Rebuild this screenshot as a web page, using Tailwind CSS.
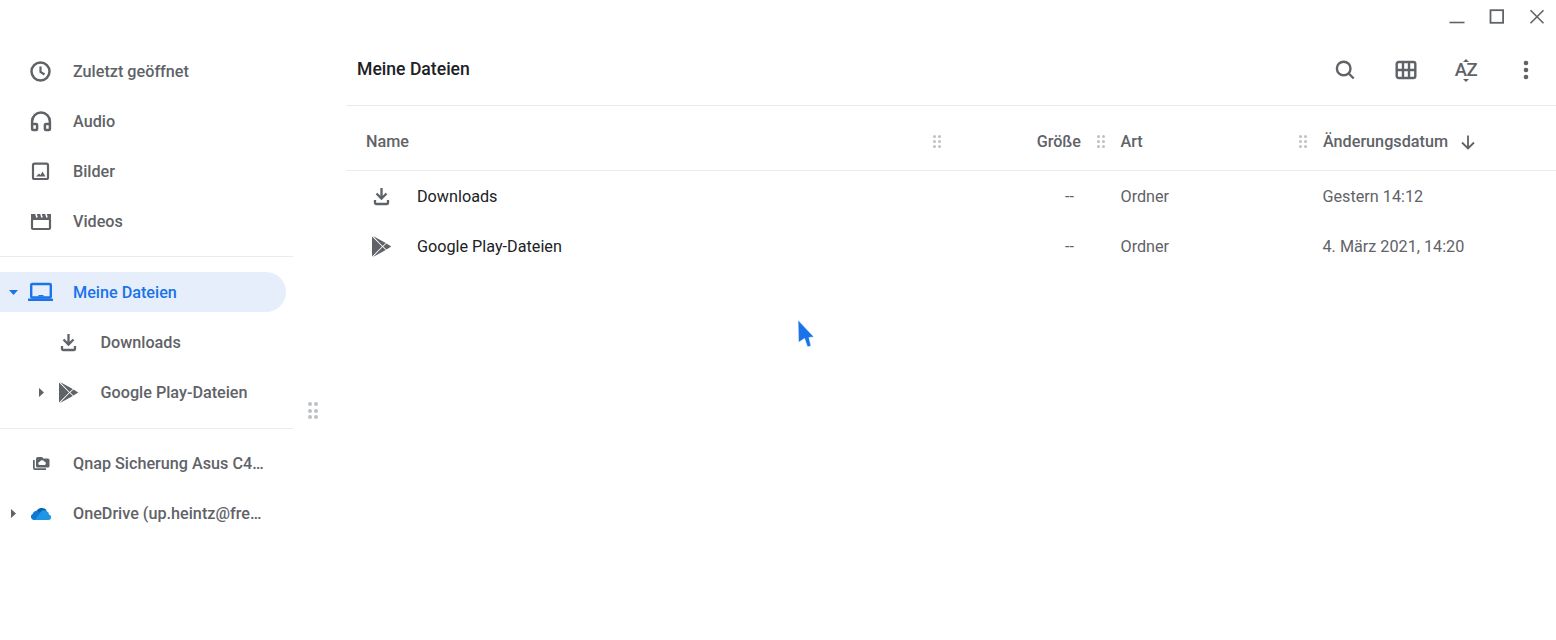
<!DOCTYPE html>
<html lang="de">
<head>
<meta charset="UTF-8">
<title>Meine Dateien</title>
<script src="https://cdn.jsdelivr.net/npm/@tailwindcss/browser@4"></script>
</head>
<body class="relative h-[640px] w-[1556px] overflow-hidden bg-white font-['Roboto',sans-serif] text-[16.2px] text-[#5f6368]">

<!-- window buttons -->
<div class="absolute right-0 top-0 flex h-[34px] items-center text-[#5f6368]">
  <svg class="w-5 h-5 mr-5" viewBox="0 0 20 20" fill="none" stroke="currentColor" stroke-width="1.6"><path d="M2.5 15.500h15"/></svg>
  <svg class="w-5 h-5 mr-5" viewBox="0 0 20 20" fill="none" stroke="currentColor" stroke-width="1.8"><rect x="3.5" y="3.2" width="12.6" height="12.6"/></svg>
  <svg class="w-5 h-5 mr-[9px]" viewBox="0 0 20 20" fill="none" stroke="currentColor" stroke-width="1.6"><path d="M3.5 3.2l13 13M16.5 3.2l-13 13"/></svg>
</div>

<div class="flex h-full">
  <!-- sidebar -->
  <aside class="w-[293px] shrink-0 pt-[46px] font-medium">
    <div class="flex h-[50px] items-center pl-[29px]">
      <svg class="w-6 h-6 mr-5" viewBox="0 0 24 24" fill="none" stroke="currentColor"><circle cx="11.5" cy="12.5" r="9" stroke-width="2.5"/><path d="M11.5 7.5v5.5l4 2.5" stroke-width="2.2"/></svg>
      <span class="pt-[2px]">Zuletzt geöffnet</span>
    </div>
    <div class="flex h-[50px] items-center pl-[29px]">
      <svg class="w-6 h-6 mr-5" viewBox="0 0 24 24" fill="none" stroke="currentColor" stroke-width="2.5"><path d="M3.1 16v-3.5a8.9 8.9 0 0 1 17.8 0V16"/><rect x="3.1" y="15" width="5" height="6" rx="1"/><rect x="15.9" y="15" width="5" height="6" rx="1"/></svg>
      <span class="pt-[2px]">Audio</span>
    </div>
    <div class="flex h-[50px] items-center pl-[29px]">
      <svg class="w-6 h-6 mr-5" viewBox="0 0 24 24" fill="currentColor"><rect x="4" y="4.7" width="15" height="15.3" rx="1.5" fill="none" stroke="currentColor" stroke-width="2.2"/><path d="M7 17.5l3-3 1.500 1.500 2-3.500 3 5z"/></svg>
      <span class="pt-[2px]">Bilder</span>
    </div>
    <div class="flex h-[50px] items-center pl-[29px]">
      <svg class="w-6 h-6 mr-5" viewBox="0 0 24 24" fill="currentColor"><rect x="3" y="10" width="18" height="10" rx="1" fill="none" stroke="currentColor" stroke-width="2.2"/><path d="M2 5h20v5H2z"/><path d="M7 5l1 3.500M12 5l1 3.500M17 5l1 3.500" stroke="#ffffff" stroke-width="1.6"/></svg>
      <span class="pt-[2px]">Videos</span>
    </div>

    <div class="mt-[10px] h-px bg-[#eaebec]"></div>

    <div class="mt-[15px] flex h-10 w-[286px] items-center rounded-r-full bg-[#e6eefb] text-[#1a73e8]">
      <svg class="ml-[9px] w-[9px] h-[5px] mr-[10px]" viewBox="0 0 10 5" preserveAspectRatio="none" fill="currentColor"><path d="M0 0h10L5 5z"/></svg>
      <svg class="w-[26px] h-6 mr-[19px]" viewBox="0 0 26 24" fill="currentColor"><rect x="3.2" y="4" width="19.6" height="13.5" rx="1" fill="none" stroke="currentColor" stroke-width="2.4"/><rect x="10.5" y="15" width="5" height="1.5"/><rect x="0" y="18.500" width="25" height="2.500" rx=".5"/></svg>
      <span class="pt-[2px]">Meine Dateien</span>
    </div>
    <div class="mt-[5px] flex h-[50px] items-center pl-[57px]">
      <svg class="w-6 h-6 mr-[19.5px]" viewBox="0 0 24 24" fill="none" stroke="currentColor" stroke-width="2.3"><path d="M11.5 4v10M6.500 9.500l5 5 5-5M5 16v3a1 1 0 0 0 1 1h11a1 1 0 0 0 1-1v-3"/></svg>
      <span class="pt-[2px]">Downloads</span>
    </div>
    <div class="flex h-[50px] items-center pl-[39px]">
      <svg class="w-[5px] h-[9px] mr-[13px]" viewBox="0 0 6 10" preserveAspectRatio="none" fill="currentColor"><path d="M0 0l6 5-6 5z"/></svg>
      <svg class="w-6 h-6 mr-[19.5px]" viewBox="0 0 24 24" fill="currentColor"><path d="M2 2.500v20l10-10zM3 2l12.800 7-3.200 3zM3 23l12.800-7-3.200-3zM13.300 12.500l3.200-3 4.800 3-4.800 3z"/></svg>
      <span class="pt-[2px]">Google Play-Dateien</span>
    </div>

    <div class="mt-[11px] h-px bg-[#eaebec]"></div>

    <div class="mt-[9px] flex h-[50px] items-center pl-[29px]">
      <svg class="w-6 h-6 mr-5" viewBox="0 0 24 24" fill="currentColor" fill-rule="evenodd"><path d="M4 9h1.700v8.300H17V19H5.700A1.700 1.700 0 0 1 4 17.300z"/><path d="M9 6h4l1.500 1.500H19a1.500 1.500 0 0 1 1.500 1.500v6a1.500 1.500 0 0 1-1.500 1.500H8.500A1.500 1.500 0 0 1 7 15V8a2 2 0 0 1 2-2zm2 8a1.600 1.600 0 0 1-.2-3.200 2.400 2.400 0 0 1 4.400-.4 1.900 1.900 0 0 1 .6 3.600z"/></svg>
      <span class="pt-[2px]">Qnap Sicherung Asus C4…</span>
    </div>
    <div class="flex h-[50px] items-center pl-[11px]">
      <svg class="w-[5px] h-[9px] mr-[13px]" viewBox="0 0 6 10" preserveAspectRatio="none" fill="currentColor"><path d="M0 0l6 5-6 5z"/></svg>
      <svg class="w-6 h-6 mr-5" viewBox="0 0 24 24"><path d="M7 12a6 6 0 0 1 10.700-2.700L12 14z" fill="#0364b8"/><path d="M8 19H5a3.300 3.300 0 0 1-1.200-6.300A4 4 0 0 1 9 10l4 4z" fill="#0f78d4"/><path d="M6 19h13.500a2.700 2.700 0 0 0 .7-5.300 5 5 0 0 0-8.200-3.200z" fill="#1e96e3"/></svg>
      <span class="pt-[2px]">OneDrive (up.heintz@fre…</span>
    </div>
  </aside>

  <!-- splitter -->
  <div class="flex w-[53px] shrink-0 justify-start pl-[15px] pt-[402px]">
    <div class="grid h-[18px] w-[10px] grid-cols-2 gap-x-[2px] gap-y-[2px]">
      <i class="h-1 w-1 rounded-full bg-[#bdc1c6]"></i><i class="h-1 w-1 rounded-full bg-[#bdc1c6]"></i>
      <i class="h-1 w-1 rounded-full bg-[#bdc1c6]"></i><i class="h-1 w-1 rounded-full bg-[#bdc1c6]"></i>
      <i class="h-1 w-1 rounded-full bg-[#bdc1c6]"></i><i class="h-1 w-1 rounded-full bg-[#bdc1c6]"></i>
    </div>
  </div>

  <!-- main -->
  <main class="flex-1">
    <header class="mt-[34px] flex h-[72px] items-center justify-between border-b border-[#eaebec] pl-[11px] pr-[18px]">
      <h1 class="text-[17.6px] font-medium text-[#202124]">Meine Dateien</h1>
      <div class="flex items-center gap-[36px]">
        <svg class="w-6 h-6" viewBox="0 0 24 24" fill="none" stroke="currentColor" stroke-width="2.4"><circle cx="9.700" cy="10.500" r="6.800"/><path d="M14.700 15.500l5 5"/></svg>
        <svg class="w-6 h-6" viewBox="0 0 24 24" fill="none" stroke="currentColor" stroke-width="2.4"><rect x="2.700" y="4" width="18.600" height="16" rx="2"/><path d="M9 4v16M15 4v16M2.700 12h18.600"/></svg>
        <div class="relative flex h-6 w-6 items-center justify-center pt-[2px] text-[18.5px] leading-none font-medium tracking-[-0.5px]">AZ
          <svg class="absolute left-[9px] top-[1px] h-[3px] w-[6px]" viewBox="0 0 6 3" fill="currentColor"><path d="M3 0l3 3H0z"/></svg>
          <svg class="absolute left-[9px] bottom-0 h-[3px] w-[6px]" viewBox="0 0 6 3" fill="currentColor"><path d="M3 3l3-3H0z"/></svg>
        </div>
        <svg class="w-6 h-6" viewBox="0 0 24 24" fill="currentColor"><circle cx="12" cy="5" r="2.300"/><circle cx="12" cy="12" r="2.300"/><circle cx="12" cy="19" r="2.300"/></svg>
      </div>
    </header>

    <div class="grid grid-cols-[601px_164px_202px_243px]">
      <!-- header row -->
      <div class="col-span-4 grid h-[65px] grid-cols-subgrid items-center border-b border-[#eaebec] pt-[8px] font-medium">
        <div class="flex items-center justify-between pl-5 pr-[6px]"><span>Name</span><div class="grid h-[13px] w-[8px] grid-cols-2 gap-[2px]"><i class="size-[3px] rounded-full bg-[#bdc1c6]"></i><i class="size-[3px] rounded-full bg-[#bdc1c6]"></i><i class="size-[3px] rounded-full bg-[#bdc1c6]"></i><i class="size-[3px] rounded-full bg-[#bdc1c6]"></i><i class="size-[3px] rounded-full bg-[#bdc1c6]"></i><i class="size-[3px] rounded-full bg-[#bdc1c6]"></i></div></div>
        <div class="flex items-center justify-end gap-4 pr-[6px]"><span>Größe</span><div class="grid h-[13px] w-[8px] grid-cols-2 gap-[2px]"><i class="size-[3px] rounded-full bg-[#bdc1c6]"></i><i class="size-[3px] rounded-full bg-[#bdc1c6]"></i><i class="size-[3px] rounded-full bg-[#bdc1c6]"></i><i class="size-[3px] rounded-full bg-[#bdc1c6]"></i><i class="size-[3px] rounded-full bg-[#bdc1c6]"></i><i class="size-[3px] rounded-full bg-[#bdc1c6]"></i></div></div>
        <div class="flex items-center justify-between pl-[9.5px] pr-[6px]"><span>Art</span><div class="grid h-[13px] w-[8px] grid-cols-2 gap-[2px]"><i class="size-[3px] rounded-full bg-[#bdc1c6]"></i><i class="size-[3px] rounded-full bg-[#bdc1c6]"></i><i class="size-[3px] rounded-full bg-[#bdc1c6]"></i><i class="size-[3px] rounded-full bg-[#bdc1c6]"></i><i class="size-[3px] rounded-full bg-[#bdc1c6]"></i><i class="size-[3px] rounded-full bg-[#bdc1c6]"></i></div></div>
        <div class="flex items-center pl-[10px]"><span>Änderungsdatum</span><svg class="ml-[10px] w-5 h-5" viewBox="0 0 20 20" fill="none" stroke="currentColor" stroke-width="1.8"><path d="M10 3.500v13M4 10.500l6 6 6-6"/></svg></div>
      </div>
      <!-- rows -->
      <div class="flex h-[50px] items-center pl-[24px] text-[#202124]">
        <svg class="w-6 h-6 mr-[23px] text-[#5f6368]" viewBox="0 0 24 24" fill="none" stroke="currentColor" stroke-width="2.3"><path d="M11.5 4v10M6.500 9.500l5 5 5-5M5 16v3a1 1 0 0 0 1 1h11a1 1 0 0 0 1-1v-3"/></svg>
        <span class="pt-[2px]">Downloads</span>
      </div>
      <div class="flex h-[50px] items-center justify-end pt-[2px] pr-[37px]">--</div>
      <div class="flex h-[50px] items-center pt-[2px] pl-[9.5px]">Ordner</div>
      <div class="flex h-[50px] items-center pt-[2px] pl-[9.5px]">Gestern 14:12</div>

      <div class="flex h-[50px] items-center pl-[24px] text-[#202124]">
        <svg class="w-6 h-6 mr-[23px] text-[#5f6368]" viewBox="0 0 24 24" fill="currentColor"><path d="M2 2.500v20l10-10zM3 2l12.800 7-3.200 3zM3 23l12.800-7-3.200-3zM13.300 12.500l3.200-3 4.800 3-4.800 3z"/></svg>
        <span class="pt-[2px]">Google Play-Dateien</span>
      </div>
      <div class="flex h-[50px] items-center justify-end pt-[2px] pr-[37px]">--</div>
      <div class="flex h-[50px] items-center pt-[2px] pl-[9.5px]">Ordner</div>
      <div class="flex h-[50px] items-center pt-[2px] pl-[9.5px]">4. März 2021, 14:20</div>
    </div>
  </main>
</div>

<!-- mouse pointer -->
<svg class="absolute left-[796px] top-[319px] w-[19px] h-[29px]" viewBox="0 0 19 29"><path d="M2 1l16 17-5 .5 2 8.500-3.500 1-3-8.500-6 4z" fill="#1a73e8" stroke="#ffffff" stroke-opacity="0.6" stroke-width="1"/></svg>

</body>
</html>
